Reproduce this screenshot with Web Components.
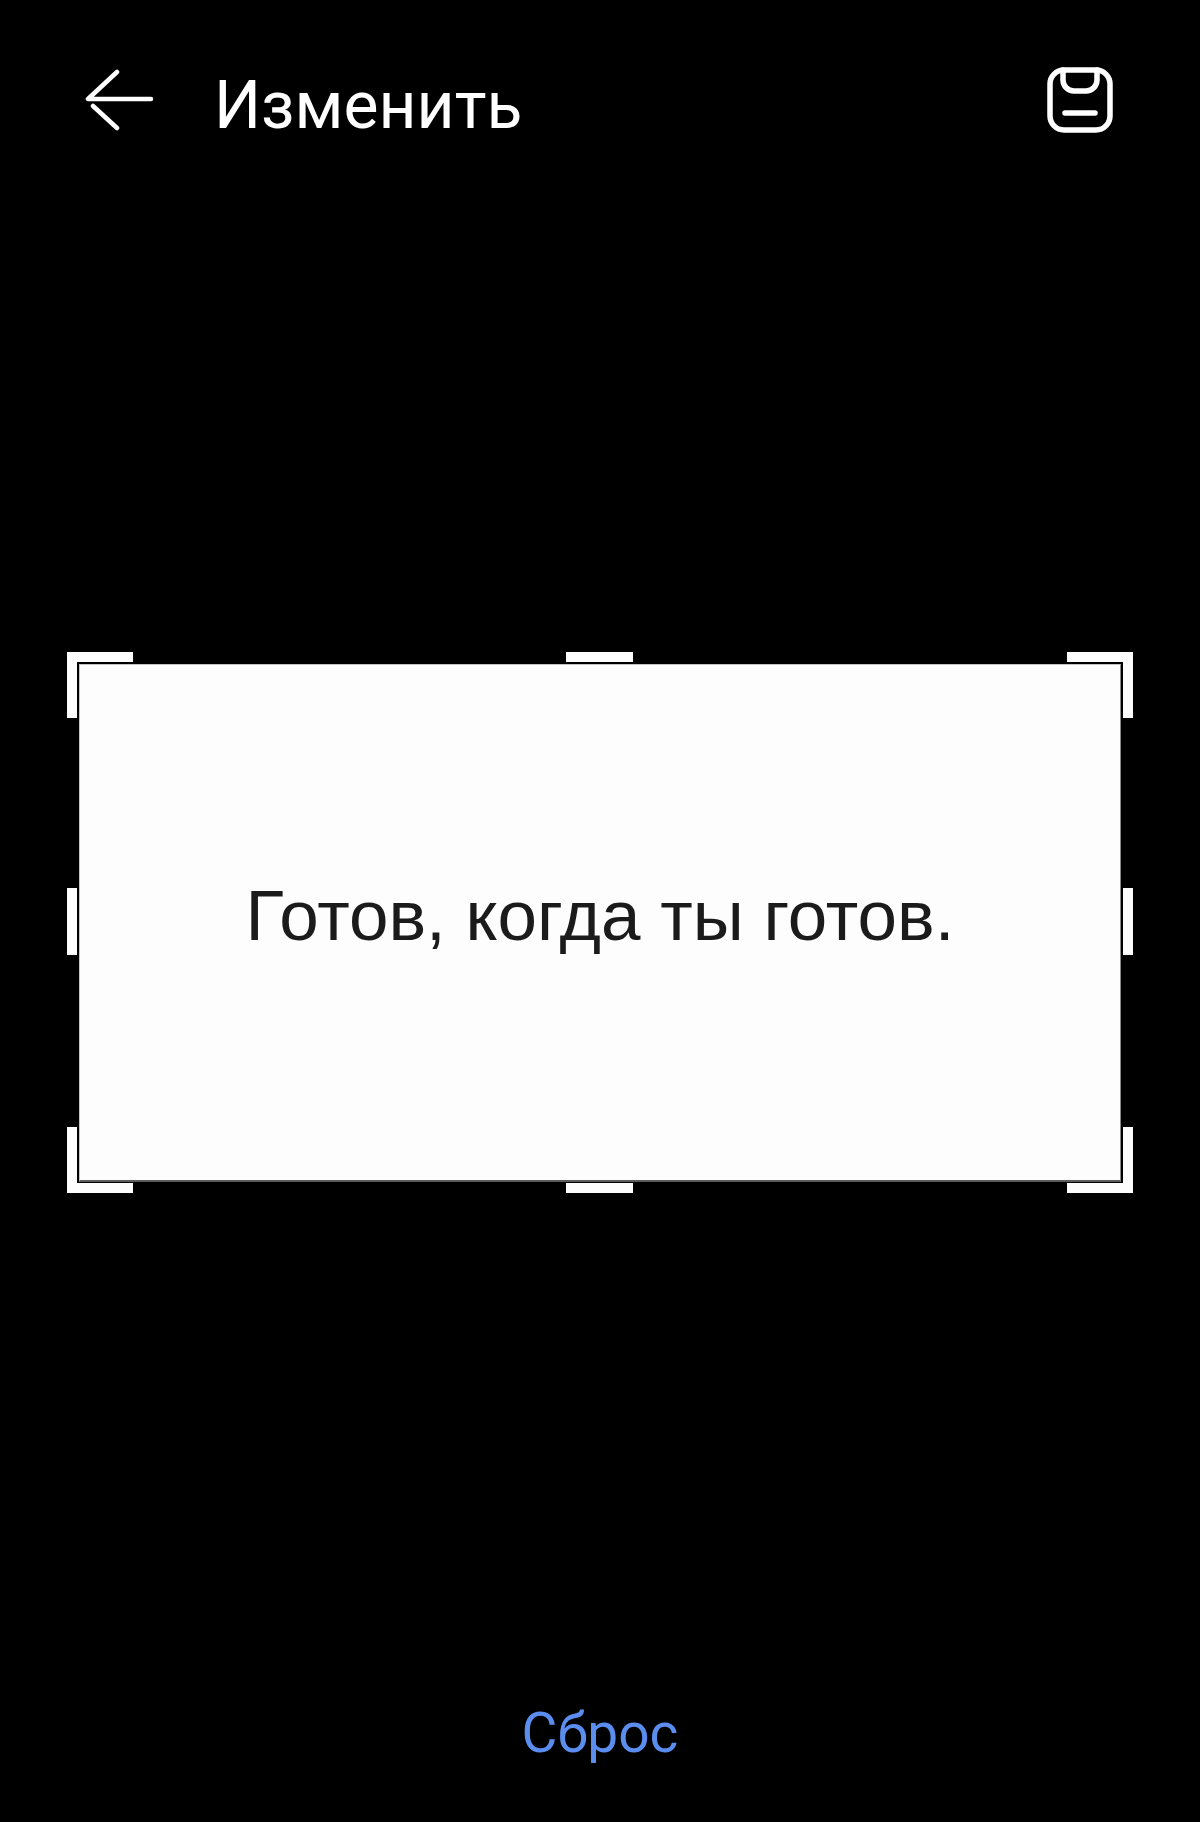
<!DOCTYPE html>
<html lang="ru">
<head>
<meta charset="utf-8">
<title>Изменить</title>
<style>
  html, body { margin: 0; background: #000; }
</style>
</head>
<body>
<edit-screen>
  <edit-header slot="header" title-text="Изменить"></edit-header>
  <crop-frame slot="content">Готов, когда ты готов.</crop-frame>
  <reset-action slot="footer">Сброс</reset-action>
</edit-screen>

<script>
class EditScreen extends HTMLElement {
  constructor() {
    super();
    this.attachShadow({ mode: "open" });
    this.shadowRoot.innerHTML = `
      <style>
        :host {
          display: flex;
          flex-direction: column;
          height: 1822px;
          background: #000;
          font-family: Roboto, "Noto Sans", sans-serif;
        }
      </style>
      <slot name="header"></slot>
      <slot name="content"></slot>
      <slot name="footer"></slot>
    `;
  }
}

class EditHeader extends HTMLElement {
  constructor() {
    super();
    this.attachShadow({ mode: "open" });
    this.shadowRoot.innerHTML = `
      <style>
        :host {
          display: flex;
          align-items: center;
          height: 200px;
          padding: 0 87px 0 85px;
          color: #fff;
        }
        svg { display: block; flex: none; }
        .title {
          flex: 1;
          margin-left: 59px;
          font-size: 66px;
          line-height: 1;
          font-weight: 400;
          position: relative;
          top: 6px;
        }
      </style>
      <svg width="70" height="62" viewBox="0 0 70 62" fill="none" stroke="#fff" stroke-width="4.5" stroke-linecap="round" stroke-linejoin="round">
        <path d="M32 3 L3 30 H66"/>
        <path d="M8 37 L32 59"/>
      </svg>
      <div class="title"></div>
      <svg width="66" height="66" viewBox="0 0 66 66" fill="none" stroke="#fff" stroke-width="5.5" stroke-linecap="round">
        <rect x="3" y="3" width="60" height="60" rx="14"/>
        <path d="M16 3 V13 a11 11 0 0 0 11 11 H39 a11 11 0 0 0 11 -11 V3"/>
        <path d="M18 46 H48"/>
      </svg>
    `;
    this.shadowRoot.querySelector(".title").textContent = this.getAttribute("title-text");
  }
}

class CropFrame extends HTMLElement {
  constructor() {
    super();
    this.attachShadow({ mode: "open" });
    this.shadowRoot.innerHTML = `
      <style>
        :host {
          display: block;
          position: relative;
          box-sizing: border-box;
          width: 1066px;
          height: 541px;
          margin: 452px 0 0 67px;
          padding: 12px 12px 11px;
        }
        .image {
          box-sizing: border-box;
          display: flex;
          align-items: center;
          justify-content: center;
          height: 100%;
          padding-bottom: 14px;
          background: #fdfdfd;
          border: 1px solid #c4c4c4;
          border-bottom: 2px solid #5c5c5c;
          border-right-color: #8a8a8a;
          color: #1b1b1b;
          font-family: "Liberation Sans", Arial, sans-serif;
          font-size: 71px;
        }
        .h { position: absolute; background: #fdfdfd; }
        .corner { width: 66px; height: 66px; background: none; box-sizing: border-box; border: 0 solid #fdfdfd; }
        .tl { left: 0; top: 0; border-width: 10px 0 0 10px; }
        .tr { right: 0; top: 0; border-width: 10px 10px 0 0; }
        .bl { left: 0; bottom: 0; border-width: 0 0 10px 10px; }
        .br { right: 0; bottom: 0; border-width: 0 10px 10px 0; }
        .top, .bottom { left: 499px; width: 67px; height: 10px; }
        .top { top: 0; }
        .bottom { bottom: 0; }
        .left, .right { top: 236px; width: 10px; height: 67px; }
        .left { left: 0; }
        .right { right: 0; }
      </style>
      <div class="image"><slot></slot></div>
      <i class="h corner tl"></i><i class="h corner tr"></i>
      <i class="h corner bl"></i><i class="h corner br"></i>
      <i class="h top"></i><i class="h bottom"></i>
      <i class="h left"></i><i class="h right"></i>
    `;
  }
}

class ResetAction extends HTMLElement {
  constructor() {
    super();
    this.attachShadow({ mode: "open" });
    this.shadowRoot.innerHTML = `
      <style>
        :host {
          display: block;
          margin-top: 502px;
          text-align: center;
          color: #5b8def;
          font-size: 55px;
          line-height: 76px;
        }
      </style>
      <slot></slot>
    `;
  }
}

customElements.define("edit-screen", EditScreen);
customElements.define("edit-header", EditHeader);
customElements.define("crop-frame", CropFrame);
customElements.define("reset-action", ResetAction);
</script>
</body>
</html>
